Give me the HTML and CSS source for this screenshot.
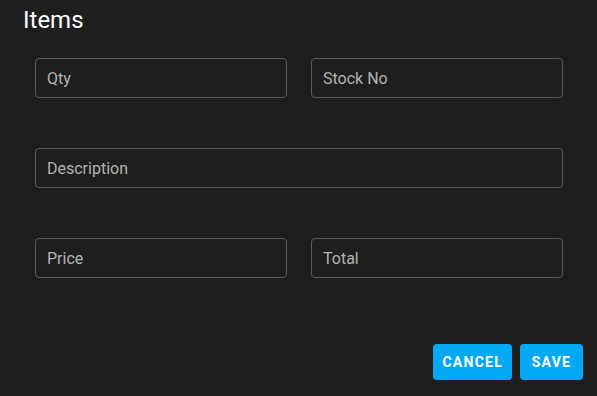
FILE: index.html
```html
<!DOCTYPE html>
<html lang="en">
<head>
    <meta charset="UTF-8">
    <title>Items</title>
    <link rel="stylesheet" href="styles.css">
</head>
<body>
    <div class="dialog">
        <h2 class="dialog-title">Items</h2>

        <form class="item-form">
            <input type="text" class="field" placeholder="Qty">
            <input type="text" class="field" placeholder="Stock No">
            <input type="text" class="field wide" placeholder="Description">
            <input type="text" class="field" placeholder="Price">
            <input type="text" class="field" placeholder="Total">
        </form>

        <div class="actions">
            <button type="button" class="btn">Cancel</button>
            <button type="button" class="btn">Save</button>
        </div>
    </div>
</body>
</html>
```

FILE: styles.css
```css
:root {
    --bg: #1e1e1e;
    --border: #5a5a5a;
    --muted: #b3b3b3;
    --primary: #03a9f4;
}

* {
    margin: 0;
    padding: 0;
    box-sizing: border-box;
}

body {
    font-family: Roboto, "Liberation Sans", sans-serif;
    background: var(--bg);
    color: #fff;
    width: 597px;
    height: 396px;
    overflow: hidden;
}

.dialog {
    display: flex;
    flex-direction: column;
    height: 100%;
}

.dialog-title {
    font-size: 24px;
    font-weight: 400;
    line-height: 32px;
    margin: 4px 0 0 23px;
}

.item-form {
    display: grid;
    grid-template-columns: 1fr 1fr;
    column-gap: 24px;
    row-gap: 50px;
    padding: 22px 34px 0 35px;
}

.field {
    height: 40px;
    padding: 0 11px;
    background: transparent;
    border: 1px solid var(--border);
    border-radius: 4px;
    color: #fff;
    font-family: inherit;
    font-size: 16px;
    outline: none;
}

.field::placeholder {
    color: var(--muted);
    opacity: 1;
}

.field.wide {
    grid-column: 1 / 3;
}

.actions {
    display: flex;
    justify-content: flex-end;
    gap: 8px;
    margin-top: 66px;
    padding-right: 14px;
}

.btn {
    height: 36px;
    padding: 0 9px;
    min-width: 63px;
    background: var(--primary);
    color: #fff;
    border: none;
    border-radius: 4px;
    font-family: inherit;
    font-size: 14px;
    font-weight: 700;
    letter-spacing: 1.25px;
    text-transform: uppercase;
    cursor: pointer;
}
```
